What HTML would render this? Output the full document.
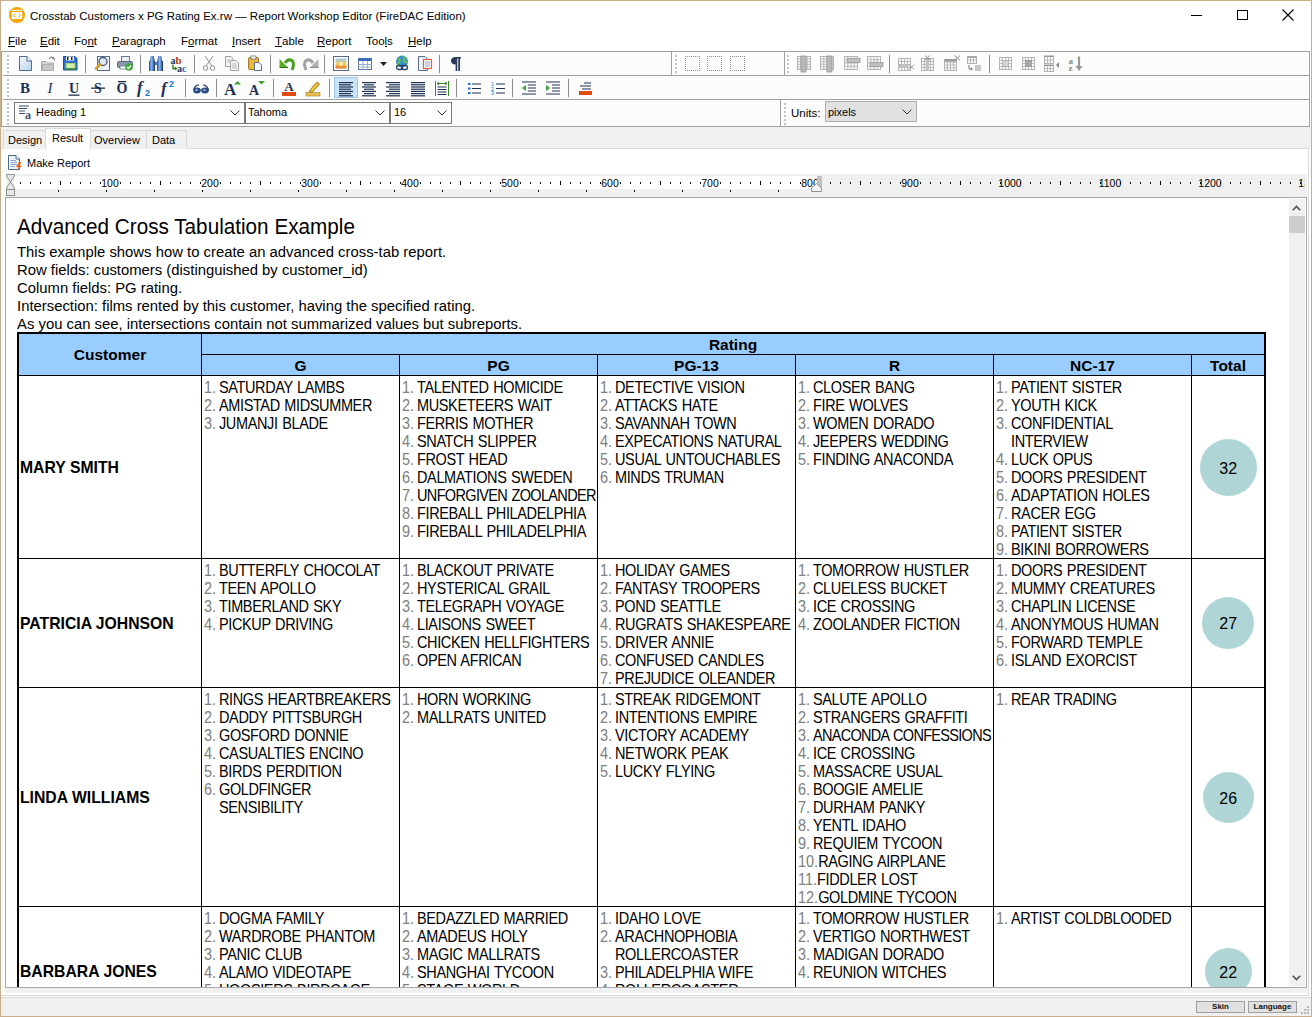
<!DOCTYPE html>
<html><head><meta charset="utf-8">
<style>
*{box-sizing:border-box}
html,body{margin:0;padding:0}
body{width:1312px;height:1017px;position:relative;overflow:hidden;background:#fff;font-family:"Liberation Sans",sans-serif;color:#000}
.a{position:absolute}
#win{left:0;top:0;width:1312px;height:1017px;border:1px solid #c9ae8c;background:#fff}
.title{left:30px;top:10px;font-size:11.5px;white-space:nowrap;color:#000}
.menu span{position:absolute;top:34.5px;font-size:11.5px;white-space:nowrap}
.menu u{text-decoration:none;position:relative}.menu u::after{content:"";position:absolute;left:0;right:0;bottom:0px;height:1px;background:#000}
#tb{left:1px;top:51px;width:1309px;height:76px;border:1px solid #a0a0a0;border-left:1px solid #a0a0a0;background:#fcfcfc}
.hl{height:1px;background:#a0a0a0}
.vl{width:1px;background:#a0a0a0}
.sep{width:1px;height:18px;background:#a0a0a0}
.grip{width:2px;border-left:2px dotted #b8b8b8}
#tabs{left:1px;top:127px;width:1310px;height:22px;background:#f0f0f0}
.tab{position:absolute;border:1px solid #d9d9d9;border-bottom:none;background:#f0f0f0;font-size:11px;padding-left:5px;white-space:nowrap}
#page{left:1px;top:148px;width:1308px;height:848px;background:#fff;border-top:1px solid #d9d9d9;border-right:1px solid #d9d9d9;border-bottom:1px solid #d9d9d9}
#ruler{left:6px;top:174px;width:1301px;height:23px;background:#f0f0f0}
#content{left:5px;top:197px;width:1302px;height:791px;border:1px solid #a3a7ae;background:#fff;overflow:hidden}
#status{left:1px;top:997px;width:1310px;height:19px;background:#f0f0f0;border-top:1px solid #d9d9d9}
.btn{position:absolute;top:1001px;height:12px;border:1px solid #a0a0a0;background:#e1e1e1;font-size:8px;font-weight:bold;text-align:center;line-height:10px;color:#111}

.hd{font-size:22.5px;white-space:nowrap;line-height:24px;transform:scaleX(0.92);transform-origin:0 0}
.it{font-size:15.5px;white-space:nowrap;line-height:18px;transform:scaleX(0.958);transform-origin:0 0}
.hb{font-size:15.5px;font-weight:bold;line-height:18px;white-space:nowrap}
.nm{font-size:15.75px;font-weight:bold;line-height:18px;white-space:nowrap}
.lst{font-size:15.75px;line-height:18px;white-space:nowrap;letter-spacing:-0.4px;word-spacing:1px;transform:scaleX(0.92);transform-origin:0 0}
.li{height:18px}
.n{display:inline-block;min-width:16.3px;color:#808080;letter-spacing:0}
.rl{font-size:10.5px;text-align:center;line-height:12px;white-space:nowrap}
.combo{border:1px solid #7a7a7a;background:#fff}
.cbt{font-size:11px;white-space:nowrap}
.circ{border-radius:50%;background:#b0d5d6;text-align:center;line-height:58px;font-size:16px}
</style></head><body>
<div id="win" class="a"></div>
<!-- title bar -->
<svg class="a" style="left:9px;top:7px" width="16" height="16" viewBox="0 0 16 16"><circle cx="8" cy="8" r="8" fill="#f7a400"/><rect x="2.8" y="2.8" width="10.4" height="1.1" fill="#fff"/><rect x="2.8" y="5" width="10.4" height="7" fill="#fff"/><path d="M6.3 6.6L4.8 8.5L6.3 10.4M9.7 6.6L11.2 8.5L9.7 10.4" fill="none" stroke="#f7a400" stroke-width="1"/></svg>
<div class="a title">Crosstab Customers x PG Rating Ex.rw — Report Workshop Editor (FireDAC Edition)</div>
<div class="a" style="left:1191px;top:15px;width:11px;height:1px;background:#000"></div>
<div class="a" style="left:1237px;top:10px;width:11px;height:10px;border:1px solid #000"></div>
<svg class="a" style="left:1282px;top:9px" width="12" height="12" viewBox="0 0 12 12"><path d="M0.5 0.5 L11.5 11.5 M11.5 0.5 L0.5 11.5" stroke="#000" stroke-width="1.1"/></svg>
<!-- menu -->
<div class="menu">
<span style="left:8px"><u>F</u>ile</span>
<span style="left:40px"><u>E</u>dit</span>
<span style="left:74px">Fo<u>n</u>t</span>
<span style="left:112px"><u>P</u>aragraph</span>
<span style="left:181px">F<u>o</u>rmat</span>
<span style="left:232px"><u>I</u>nsert</span>
<span style="left:275px"><u>T</u>able</span>
<span style="left:317px"><u>R</u>eport</span>
<span style="left:366px">Too<u>l</u>s</span>
<span style="left:408px"><u>H</u>elp</span>
</div>
<!-- toolbar -->
<div id="tb" class="a"></div>
<div class="a hl" style="left:3px;top:75px;width:1306px"></div>
<div class="a hl" style="left:3px;top:99px;width:1306px"></div>
<svg class="a" style="left:17px;top:55px" width="16" height="16" viewBox="0 0 16 16"><defs><linearGradient id="gd" x1="0" y1="0" x2="1" y2="1"><stop offset="0" stop-color="#f4f8fc"/><stop offset="1" stop-color="#b8d4ea"/></linearGradient></defs><path d="M2.5 1.5H10L14.5 6V15.5H2.5Z" fill="url(#gd)" stroke="#4d6a8c"/><path d="M10 1.5V6H14.5" fill="#fff" stroke="#4d6a8c"/></svg>
<svg class="a" style="left:40px;top:55px" width="16" height="16" viewBox="0 0 16 16"><path d="M1.5 6.5H6L7.5 8H13.5V15.5H1.5Z" fill="#d6d6d6" stroke="#a8a8a8"/><path d="M2.5 9.5H13.5V15.5H2.5Z" fill="#c8c8c8" stroke="#b0b0b0"/><path d="M9 4 Q11 0.5 14 3 M14 3 L14.5 5.5 M14 3 L12 3.2" fill="none" stroke="#707070" stroke-width="1"/></svg>
<svg class="a" style="left:62px;top:55px" width="16" height="16" viewBox="0 0 16 16"><path d="M1.5 1.5H13L15 3.5V15H1.5Z" fill="#2e6fd0" stroke="#1f4e9a"/><rect x="4" y="1.5" width="8" height="4" fill="#fff"/><rect x="5" y="2" width="1.5" height="3" fill="#222"/><rect x="9" y="2" width="1.5" height="3" fill="#222"/><rect x="3.5" y="8" width="10" height="6" fill="#a8d870"/><rect x="5" y="9.5" width="7" height="1" fill="#fff"/><rect x="5" y="11.5" width="7" height="1" fill="#fff"/><rect x="3.5" y="13" width="10" height="1.5" fill="#4a9a2a"/></svg>
<div class="a" style="left:85px;top:55px;width:1px;height:18px;background:#8c8c8c"></div>
<svg class="a" style="left:94px;top:55px" width="16" height="16" viewBox="0 0 16 16"><rect x="3.5" y="1.5" width="12" height="14" fill="#eef3f8" stroke="#5a7088"/><circle cx="9" cy="6.5" r="4" fill="#dbe8f4" stroke="#4a5a6a" stroke-width="1.3"/><path d="M6 9.5 L2 13.5" stroke="#d4a020" stroke-width="2.5" stroke-linecap="round"/></svg>
<svg class="a" style="left:117px;top:55px" width="16" height="16" viewBox="0 0 16 16"><rect x="4.5" y="1.5" width="8" height="5" fill="#e8f0f8" stroke="#6a7a8a"/><rect x="0.5" y="6.5" width="15" height="6" rx="1" fill="#8a9aaa" stroke="#5a6a7a"/><rect x="3" y="11" width="10" height="3" fill="#fff" stroke="#6a7a8a" stroke-width="0.8"/><circle cx="12" cy="12" r="3.8" fill="#3aaa3a"/><path d="M10 12 L11.5 13.5 L14 10.5" stroke="#fff" stroke-width="1.2" fill="none"/></svg>
<div class="a" style="left:140px;top:55px;width:1px;height:18px;background:#8c8c8c"></div>
<svg class="a" style="left:148px;top:55px" width="16" height="16" viewBox="0 0 16 16"><defs><linearGradient id="gb" x1="0" y1="0" x2="1" y2="0"><stop offset="0" stop-color="#1a4fa8"/><stop offset="0.45" stop-color="#8ab8f0"/><stop offset="1" stop-color="#102a60"/></linearGradient></defs><path d="M1 6H7V16H1Z M2 3.5H6.5V6H2Z M2.5 1H6V3.5H2.5Z" fill="url(#gb)"/><path d="M9 6H15V16H9Z M9.5 3.5H14V6H9.5Z M10 1H13.5V3.5H10Z" fill="url(#gb)"/><rect x="7" y="7" width="2" height="3" fill="#4a7ad0"/></svg>
<svg class="a" style="left:170px;top:55px" width="18" height="17" viewBox="0 0 18 17"><text x="0.5" y="8.5" font-family="Liberation Serif" font-weight="bold" font-size="10" fill="#1e3050">a</text><text x="5.5" y="8.5" font-family="Liberation Serif" font-weight="bold" font-size="11" fill="#b03a10">b</text><path d="M3 9.5V13.5H6" stroke="#2a7a10" stroke-width="1.4" fill="none"/><path d="M5 11.5L7.5 13.5L5 15.5Z" fill="#2a7a10"/><text x="7" y="16.5" font-family="Liberation Serif" font-weight="bold" font-size="10" fill="#1e3050">a</text><text x="12" y="16.5" font-family="Liberation Serif" font-weight="bold" font-size="10" fill="#2a6ad0">c</text></svg>
<div class="a" style="left:194px;top:55px;width:1px;height:18px;background:#8c8c8c"></div>
<svg class="a" style="left:201px;top:55px" width="16" height="16" viewBox="0 0 16 16"><path d="M4 1 L11 11 M12 1 L5 11" stroke="#909090" stroke-width="1"/><circle cx="4.5" cy="13" r="2.3" fill="none" stroke="#909090"/><circle cx="11.5" cy="13" r="2.3" fill="none" stroke="#909090"/></svg>
<svg class="a" style="left:224px;top:55px" width="16" height="16" viewBox="0 0 16 16"><path d="M1.5 1.5H7L9 3.5V11.5H1.5Z" fill="#f4f4f4" stroke="#a0a0a0"/><path d="M6.5 5.5H12L14.5 8V15.5H6.5Z" fill="#f4f4f4" stroke="#a0a0a0"/><path d="M8 9H12M8 11H13M8 13H13M3 5H7M3 7H7" stroke="#b8b8b8"/></svg>
<svg class="a" style="left:247px;top:55px" width="16" height="16" viewBox="0 0 16 16"><rect x="1.5" y="2.5" width="10" height="12" rx="1" fill="#e8b840" stroke="#a07820"/><rect x="4" y="1" width="5" height="3" fill="#fff" stroke="#707070" stroke-width="0.8"/><path d="M7.5 7.5H12L14.5 10V15.5H7.5Z" fill="#f4f8fc" stroke="#5a7090"/></svg>
<div class="a" style="left:270px;top:55px;width:1px;height:18px;background:#8c8c8c"></div>
<svg class="a" style="left:279px;top:55px" width="17" height="17" viewBox="0 0 17 17"><path d="M6 8 Q9 3.5 13 5.5 Q16 8 13 15" fill="none" stroke="#4aa020" stroke-width="3"/><path d="M0.5 4V12.5H9Z" fill="#5ab02a"/><path d="M0.5 12.5H9" stroke="#2a7010" stroke-width="1"/></svg>
<svg class="a" style="left:302px;top:55px" width="17" height="17" viewBox="0 0 17 17"><path d="M11 8 Q8 3.5 4 5.5 Q1 8 4 15" fill="none" stroke="#a0a0a0" stroke-width="3"/><path d="M16.5 4V12.5H8Z" fill="#b0b0b0"/><path d="M16.5 12.5H8" stroke="#888" stroke-width="1"/></svg>
<div class="a" style="left:324px;top:55px;width:1px;height:18px;background:#8c8c8c"></div>
<svg class="a" style="left:333px;top:55px" width="16" height="16" viewBox="0 0 16 16"><defs><linearGradient id="gs" x1="0" y1="0" x2="0" y2="1"><stop offset="0" stop-color="#9cc8f0"/><stop offset="0.55" stop-color="#f8d060"/><stop offset="1" stop-color="#e07020"/></linearGradient></defs><rect x="0.5" y="1.5" width="15" height="14" fill="#fff" stroke="#5a6a80"/><rect x="2.5" y="3.5" width="11" height="10" fill="url(#gs)"/><circle cx="8" cy="9" r="1.8" fill="#fff8c0"/></svg>
<svg class="a" style="left:357px;top:55px" width="16" height="16" viewBox="0 0 16 16"><rect x="1.5" y="3.5" width="13" height="11" fill="#fff" stroke="#5a78a0"/><rect x="1.5" y="3.5" width="13" height="2.5" fill="#3a6ac0"/><path d="M1.5 9.5H14.5M1.5 12H14.5M6 6V14.5M10.5 6V14.5" stroke="#9ab0d0"/></svg>
<svg class="a" style="left:380px;top:62px" width="8" height="4" viewBox="0 0 8 4"><path d="M0 0H7L3.5 4Z" fill="#222"/></svg>
<svg class="a" style="left:394px;top:55px" width="16" height="16" viewBox="0 0 16 16"><circle cx="8" cy="6.5" r="6" fill="#3a90d8"/><path d="M4 3 Q7 5 5 8 Q3 9 4 11 M9 1.5 Q12 4 10 6 Q12 8 13 7" fill="none" stroke="#6ac040" stroke-width="2"/><rect x="2.5" y="10.5" width="6" height="4" rx="2" fill="none" stroke="#2a4060" stroke-width="1.3"/><rect x="7.5" y="10.5" width="6" height="4" rx="2" fill="none" stroke="#2a4060" stroke-width="1.3"/></svg>
<svg class="a" style="left:417px;top:55px" width="16" height="16" viewBox="0 0 16 16"><path d="M1.5 1.5H8L10.5 4V15.5H1.5Z" fill="#eef3f8" stroke="#5a7090"/><rect x="6.5" y="4.5" width="8" height="9" fill="#fff" stroke="#e06040" stroke-width="1.2"/><path d="M8 7H13M8 9H13M8 11H13" stroke="#8aa0c0"/></svg>
<div class="a" style="left:439px;top:55px;width:1px;height:18px;background:#8c8c8c"></div>
<svg class="a" style="left:450px;top:55px" width="12" height="17" viewBox="0 0 12 17"><path d="M6 2H11V3.5H10V16H8.3V3.5H7.3V16H5.6V9.5 Q1 9.5 1 5.8 Q1 2 6 2Z" fill="#2a3a58"/></svg>
<div class="a" style="left:671px;top:51px;width:1px;height:24px;background:#a0a0a0"></div>
<div class="a" style="left:784px;top:51px;width:1px;height:24px;background:#a0a0a0"></div>
<div class="a" style="left:780px;top:99px;width:1px;height:27px;background:#a0a0a0"></div>
<div class="a" style="left:685px;top:56px;width:15px;height:15px;border:1px dotted #909090"></div>
<div class="a" style="left:707px;top:56px;width:15px;height:15px;border:1px dotted #909090"></div>
<div class="a" style="left:730px;top:56px;width:15px;height:15px;border:1px dotted #909090"></div>
<svg class="a" style="left:797px;top:55px" width="18" height="18" viewBox="0 0 18 18"><rect x="0.5" y="1.5" width="13" height="13" fill="#fafafa" stroke="#b4b4b4"/><path d="M3.8 1 V15" stroke="#b4b4b4" stroke-width="0.9"/><path d="M7.0 1 V15" stroke="#b4b4b4" stroke-width="0.9"/><path d="M10.2 1 V15" stroke="#b4b4b4" stroke-width="0.9"/><path d="M0 4.1 H14" stroke="#b4b4b4" stroke-width="0.9"/><path d="M0 6.7 H14" stroke="#b4b4b4" stroke-width="0.9"/><path d="M0 9.3 H14" stroke="#b4b4b4" stroke-width="0.9"/><path d="M0 11.9 H14" stroke="#b4b4b4" stroke-width="0.9"/><rect x="4" y="1" width="5" height="16" fill="#b8b8b8" stroke="#9a9a9a" stroke-width="0.8"/></svg>
<svg class="a" style="left:820px;top:55px" width="18" height="18" viewBox="0 0 18 18"><rect x="0.5" y="1.5" width="13" height="13" fill="#fafafa" stroke="#b4b4b4"/><path d="M3.8 1 V15" stroke="#b4b4b4" stroke-width="0.9"/><path d="M7.0 1 V15" stroke="#b4b4b4" stroke-width="0.9"/><path d="M10.2 1 V15" stroke="#b4b4b4" stroke-width="0.9"/><path d="M0 4.1 H14" stroke="#b4b4b4" stroke-width="0.9"/><path d="M0 6.7 H14" stroke="#b4b4b4" stroke-width="0.9"/><path d="M0 9.3 H14" stroke="#b4b4b4" stroke-width="0.9"/><path d="M0 11.9 H14" stroke="#b4b4b4" stroke-width="0.9"/><rect x="7" y="1" width="5" height="16" fill="#b8b8b8" stroke="#9a9a9a" stroke-width="0.8"/></svg>
<svg class="a" style="left:844px;top:55px" width="18" height="18" viewBox="0 0 18 18"><rect x="0.5" y="1.5" width="13" height="13" fill="#fafafa" stroke="#b4b4b4"/><path d="M3.8 1 V15" stroke="#b4b4b4" stroke-width="0.9"/><path d="M7.0 1 V15" stroke="#b4b4b4" stroke-width="0.9"/><path d="M10.2 1 V15" stroke="#b4b4b4" stroke-width="0.9"/><path d="M0 4.8 H14" stroke="#b4b4b4" stroke-width="0.9"/><path d="M0 8.0 H14" stroke="#b4b4b4" stroke-width="0.9"/><path d="M0 11.2 H14" stroke="#b4b4b4" stroke-width="0.9"/><rect x="3" y="3.5" width="13" height="4" fill="#c0c0c0" stroke="#9a9a9a" stroke-width="0.8"/></svg>
<svg class="a" style="left:867px;top:55px" width="18" height="18" viewBox="0 0 18 18"><rect x="0.5" y="1.5" width="13" height="13" fill="#fafafa" stroke="#b4b4b4"/><path d="M3.8 1 V15" stroke="#b4b4b4" stroke-width="0.9"/><path d="M7.0 1 V15" stroke="#b4b4b4" stroke-width="0.9"/><path d="M10.2 1 V15" stroke="#b4b4b4" stroke-width="0.9"/><path d="M0 4.8 H14" stroke="#b4b4b4" stroke-width="0.9"/><path d="M0 8.0 H14" stroke="#b4b4b4" stroke-width="0.9"/><path d="M0 11.2 H14" stroke="#b4b4b4" stroke-width="0.9"/><rect x="3" y="7.5" width="13" height="4" fill="#c0c0c0" stroke="#9a9a9a" stroke-width="0.8"/></svg>
<div class="a" style="left:889px;top:55px;width:1px;height:18px;background:#8c8c8c"></div>
<svg class="a" style="left:898px;top:55px" width="18" height="18" viewBox="0 0 18 18"><rect x="0.5" y="3.5" width="12" height="12" fill="#fafafa" stroke="#b4b4b4"/><path d="M3.5 3 V16" stroke="#b4b4b4" stroke-width="0.9"/><path d="M6.5 3 V16" stroke="#b4b4b4" stroke-width="0.9"/><path d="M9.5 3 V16" stroke="#b4b4b4" stroke-width="0.9"/><path d="M0 6.5 H13" stroke="#b4b4b4" stroke-width="0.9"/><path d="M0 9.5 H13" stroke="#b4b4b4" stroke-width="0.9"/><path d="M0 12.5 H13" stroke="#b4b4b4" stroke-width="0.9"/><rect x="0.5" y="9.5" width="10" height="3" fill="#c0c0c0"/><path d="M11 9.5L16 14.5M16 9.5L11 14.5" stroke="#888" stroke-width="0.9"/></svg>
<svg class="a" style="left:921px;top:55px" width="18" height="18" viewBox="0 0 18 18"><rect x="0.5" y="3.5" width="12" height="12" fill="#fafafa" stroke="#b4b4b4"/><path d="M3.5 3 V16" stroke="#b4b4b4" stroke-width="0.9"/><path d="M6.5 3 V16" stroke="#b4b4b4" stroke-width="0.9"/><path d="M9.5 3 V16" stroke="#b4b4b4" stroke-width="0.9"/><path d="M0 6.5 H13" stroke="#b4b4b4" stroke-width="0.9"/><path d="M0 9.5 H13" stroke="#b4b4b4" stroke-width="0.9"/><path d="M0 12.5 H13" stroke="#b4b4b4" stroke-width="0.9"/><rect x="5" y="3" width="3" height="13" fill="#c0c0c0"/><path d="M4 0.5L9 5M9 0.5L4 5" stroke="#888" stroke-width="0.9"/></svg>
<svg class="a" style="left:944px;top:55px" width="18" height="18" viewBox="0 0 18 18"><rect x="0.5" y="4.5" width="12" height="11" fill="#fafafa" stroke="#b4b4b4"/><path d="M3.5 4 V16" stroke="#b4b4b4" stroke-width="0.9"/><path d="M6.5 4 V16" stroke="#b4b4b4" stroke-width="0.9"/><path d="M9.5 4 V16" stroke="#b4b4b4" stroke-width="0.9"/><path d="M0 7.2 H13" stroke="#b4b4b4" stroke-width="0.9"/><path d="M0 10.0 H13" stroke="#b4b4b4" stroke-width="0.9"/><path d="M0 12.8 H13" stroke="#b4b4b4" stroke-width="0.9"/><rect x="0.5" y="4" width="12" height="2.5" fill="#999"/><path d="M10.5 0.5L16 5.5M16 0.5L10.5 5.5" stroke="#888" stroke-width="0.9"/></svg>
<svg class="a" style="left:967px;top:55px" width="18" height="18" viewBox="0 0 18 18"><rect x="0.5" y="1.5" width="9" height="7" fill="#fafafa" stroke="#b4b4b4"/><path d="M3.5 1 V9" stroke="#b4b4b4" stroke-width="0.9"/><path d="M6.5 1 V9" stroke="#b4b4b4" stroke-width="0.9"/><path d="M0 5.0 H10" stroke="#b4b4b4" stroke-width="0.9"/><rect x="0.5" y="1" width="9" height="2" fill="#aaa"/><path d="M2 10V14H5" stroke="#777" stroke-width="1" fill="none"/><path d="M4 12.5L6 14L4 15.5Z" fill="#777"/><path d="M8 11H14M8 13H14M8 15H14" stroke="#888" stroke-width="0.9"/></svg>
<div class="a" style="left:989px;top:55px;width:1px;height:18px;background:#8c8c8c"></div>
<svg class="a" style="left:999px;top:55px" width="18" height="18" viewBox="0 0 18 18"><rect x="0.5" y="2.5" width="12" height="12" fill="#fafafa" stroke="#b4b4b4"/><path d="M3.5 2 V15" stroke="#b4b4b4" stroke-width="0.9"/><path d="M6.5 2 V15" stroke="#b4b4b4" stroke-width="0.9"/><path d="M9.5 2 V15" stroke="#b4b4b4" stroke-width="0.9"/><path d="M0 5.5 H13" stroke="#b4b4b4" stroke-width="0.9"/><path d="M0 8.5 H13" stroke="#b4b4b4" stroke-width="0.9"/><path d="M0 11.5 H13" stroke="#b4b4b4" stroke-width="0.9"/><rect x="3.5" y="5.5" width="6" height="6" fill="#d4d4d4" stroke="#b0b0b0" stroke-width="0.8"/></svg>
<svg class="a" style="left:1022px;top:55px" width="18" height="18" viewBox="0 0 18 18"><rect x="0.5" y="2.5" width="12" height="12" fill="#fafafa" stroke="#b4b4b4"/><path d="M3.5 2 V15" stroke="#b4b4b4" stroke-width="0.9"/><path d="M6.5 2 V15" stroke="#b4b4b4" stroke-width="0.9"/><path d="M9.5 2 V15" stroke="#b4b4b4" stroke-width="0.9"/><path d="M0 5.5 H13" stroke="#b4b4b4" stroke-width="0.9"/><path d="M0 8.5 H13" stroke="#b4b4b4" stroke-width="0.9"/><path d="M0 11.5 H13" stroke="#b4b4b4" stroke-width="0.9"/><rect x="3.5" y="5.5" width="6" height="6" fill="#a8a8a8" stroke="#999" stroke-width="0.8"/></svg>
<svg class="a" style="left:1044px;top:55px" width="18" height="18" viewBox="0 0 18 18"><rect x="0.5" y="1.5" width="9" height="7" fill="#fafafa" stroke="#b4b4b4"/><path d="M3.5 1 V9" stroke="#b4b4b4" stroke-width="0.9"/><path d="M6.5 1 V9" stroke="#b4b4b4" stroke-width="0.9"/><path d="M0 5.0 H10" stroke="#b4b4b4" stroke-width="0.9"/><rect x="0" y="0.5" width="10" height="1.5" fill="#999"/><rect x="0.5" y="10.5" width="9" height="6" fill="#fafafa" stroke="#b4b4b4"/><path d="M3.5 10 V17" stroke="#b4b4b4" stroke-width="0.9"/><path d="M6.5 10 V17" stroke="#b4b4b4" stroke-width="0.9"/><path d="M0 13.5 H10" stroke="#b4b4b4" stroke-width="0.9"/><rect x="0" y="9.5" width="10" height="1.5" fill="#999"/><path d="M15 7L12 10L15 13Z" fill="#888"/></svg>
<svg class="a" style="left:1067px;top:55px" width="18" height="17" viewBox="0 0 18 17"><text x="1.5" y="8.5" font-family="Liberation Serif" font-weight="bold" font-size="9" fill="#888">a</text><text x="1.5" y="16" font-family="Liberation Serif" font-weight="bold" font-size="9" fill="#888">z</text><path d="M12 1.5V12.5" stroke="#999" stroke-width="2.2"/><path d="M8.5 11L12 16L15.5 11Z" fill="#999"/></svg>
<div class="a" style="left:7px;top:55px;width:2px;height:2px;background:#c4c4c4"></div><div class="a" style="left:7px;top:59px;width:2px;height:2px;background:#c4c4c4"></div><div class="a" style="left:7px;top:63px;width:2px;height:2px;background:#c4c4c4"></div><div class="a" style="left:7px;top:67px;width:2px;height:2px;background:#c4c4c4"></div><div class="a" style="left:7px;top:71px;width:2px;height:2px;background:#c4c4c4"></div>
<div class="a" style="left:7px;top:79px;width:2px;height:2px;background:#c4c4c4"></div><div class="a" style="left:7px;top:83px;width:2px;height:2px;background:#c4c4c4"></div><div class="a" style="left:7px;top:87px;width:2px;height:2px;background:#c4c4c4"></div><div class="a" style="left:7px;top:91px;width:2px;height:2px;background:#c4c4c4"></div><div class="a" style="left:7px;top:95px;width:2px;height:2px;background:#c4c4c4"></div>
<div class="a" style="left:7px;top:103px;width:2px;height:2px;background:#c4c4c4"></div><div class="a" style="left:7px;top:107px;width:2px;height:2px;background:#c4c4c4"></div><div class="a" style="left:7px;top:111px;width:2px;height:2px;background:#c4c4c4"></div><div class="a" style="left:7px;top:115px;width:2px;height:2px;background:#c4c4c4"></div><div class="a" style="left:7px;top:119px;width:2px;height:2px;background:#c4c4c4"></div><div class="a" style="left:7px;top:123px;width:2px;height:2px;background:#c4c4c4"></div>
<div class="a" style="left:675px;top:55px;width:2px;height:2px;background:#c4c4c4"></div><div class="a" style="left:675px;top:59px;width:2px;height:2px;background:#c4c4c4"></div><div class="a" style="left:675px;top:63px;width:2px;height:2px;background:#c4c4c4"></div><div class="a" style="left:675px;top:67px;width:2px;height:2px;background:#c4c4c4"></div><div class="a" style="left:675px;top:71px;width:2px;height:2px;background:#c4c4c4"></div>
<div class="a" style="left:787px;top:55px;width:2px;height:2px;background:#c4c4c4"></div><div class="a" style="left:787px;top:59px;width:2px;height:2px;background:#c4c4c4"></div><div class="a" style="left:787px;top:63px;width:2px;height:2px;background:#c4c4c4"></div><div class="a" style="left:787px;top:67px;width:2px;height:2px;background:#c4c4c4"></div><div class="a" style="left:787px;top:71px;width:2px;height:2px;background:#c4c4c4"></div>
<div class="a" style="left:784px;top:103px;width:2px;height:2px;background:#c4c4c4"></div><div class="a" style="left:784px;top:107px;width:2px;height:2px;background:#c4c4c4"></div><div class="a" style="left:784px;top:111px;width:2px;height:2px;background:#c4c4c4"></div><div class="a" style="left:784px;top:115px;width:2px;height:2px;background:#c4c4c4"></div><div class="a" style="left:784px;top:119px;width:2px;height:2px;background:#c4c4c4"></div><div class="a" style="left:784px;top:123px;width:2px;height:2px;background:#c4c4c4"></div>
<svg class="a" style="left:17px;top:79px" width="16" height="18" viewBox="0 0 16 18"><text x="8" y="14" text-anchor="middle" font-family="Liberation Serif" font-size="15" font-weight="bold" font-style="normal" fill="#1c3050">B</text></svg>
<svg class="a" style="left:42px;top:79px" width="16" height="18" viewBox="0 0 16 18"><text x="8" y="14" text-anchor="middle" font-family="Liberation Serif" font-size="15" font-weight="normal" font-style="italic" fill="#1c3050">I</text></svg>
<svg class="a" style="left:66px;top:79px" width="16" height="18" viewBox="0 0 16 18"><text x="8" y="14" text-anchor="middle" font-family="Liberation Serif" font-size="14" font-weight="bold" font-style="normal" fill="#1c3050">U</text><rect x="2.5" y="15.5" width="11" height="1.3" fill="#1c3050"/></svg>
<svg class="a" style="left:90px;top:79px" width="16" height="18" viewBox="0 0 16 18"><text x="8" y="14" text-anchor="middle" font-family="Liberation Serif" font-size="14" font-weight="bold" font-style="normal" fill="#1c3050">S</text><rect x="1" y="8.5" width="14" height="1.3" fill="#1c3050"/></svg>
<svg class="a" style="left:114px;top:79px" width="16" height="18" viewBox="0 0 16 18"><text x="8" y="14" text-anchor="middle" font-family="Liberation Serif" font-size="14" font-weight="bold" font-style="normal" fill="#1c3050">O</text><rect x="4" y="2" width="8" height="1.3" fill="#1c3050"/></svg>
<svg class="a" style="left:136px;top:79px" width="16" height="18" viewBox="0 0 16 18"><text x="1" y="14" font-family="Liberation Serif" font-style="italic" font-weight="bold" font-size="17" fill="#1c3050">f</text><text x="9" y="17" font-family="Liberation Sans" font-weight="bold" font-size="9" fill="#1a70d0">2</text></svg>
<svg class="a" style="left:160px;top:79px" width="16" height="18" viewBox="0 0 16 18"><text x="1" y="15" font-family="Liberation Serif" font-style="italic" font-weight="bold" font-size="17" fill="#1c3050">f</text><text x="9" y="8" font-family="Liberation Sans" font-weight="bold" font-size="9" fill="#1a70d0">2</text></svg>
<div class="a" style="left:185px;top:79px;width:1px;height:18px;background:#8c8c8c"></div>
<svg class="a" style="left:192px;top:79px" width="18" height="18" viewBox="0 0 18 18"><path d="M1.5 11 Q3 6 7 6 M16.5 11 Q15 6 11 6" fill="none" stroke="#1c3050" stroke-width="1.2"/><ellipse cx="5" cy="11.5" rx="3.8" ry="3" fill="#2a4a80"/><ellipse cx="13" cy="11.5" rx="3.8" ry="3" fill="#2a4a80"/><ellipse cx="4.5" cy="11" rx="1.5" ry="1" fill="#8ab0e0"/><ellipse cx="12.5" cy="11" rx="1.5" ry="1" fill="#8ab0e0"/><path d="M8.5 10.5H9.5" stroke="#1c3050" stroke-width="1.2"/></svg>
<div class="a" style="left:216px;top:79px;width:1px;height:18px;background:#8c8c8c"></div>
<svg class="a" style="left:224px;top:79px" width="18" height="18" viewBox="0 0 18 18"><text x="0" y="16" font-family="Liberation Serif" font-weight="bold" font-size="17" fill="#1c3050">A</text><path d="M10 5.5 L13.5 2 L17 5.5Z" fill="#3aa030"/></svg>
<svg class="a" style="left:248px;top:79px" width="18" height="18" viewBox="0 0 18 18"><text x="1" y="16" font-family="Liberation Serif" font-weight="bold" font-size="14" fill="#1c3050">A</text><path d="M10 2 L13.5 5.5 L17 2Z" fill="#3aa030"/></svg>
<div class="a" style="left:273px;top:79px;width:1px;height:18px;background:#8c8c8c"></div>
<svg class="a" style="left:281px;top:79px" width="16" height="18" viewBox="0 0 16 18"><text x="8" y="12" text-anchor="middle" font-family="Liberation Serif" font-weight="bold" font-size="13" fill="#1c3050">A</text><rect x="1" y="13" width="14" height="4" fill="#e04a10"/></svg>
<svg class="a" style="left:305px;top:79px" width="16" height="18" viewBox="0 0 16 18"><path d="M5 11 L12 3 L14.5 5 L7.5 13 L4.5 13.5 Z" fill="#f0c828" stroke="#806010" stroke-width="0.8"/><rect x="1" y="13.5" width="14" height="3.5" fill="#e8c050" stroke="#a08030" stroke-width="0.6"/></svg>
<div class="a" style="left:329px;top:79px;width:1px;height:18px;background:#8c8c8c"></div>
<div class="a" style="left:334px;top:77px;width:24px;height:21px;background:#cce4f7;border:1px solid #99c9ef"></div>
<svg class="a" style="left:338px;top:79px" width="16" height="18" viewBox="0 0 16 18"><rect x="1" y="3.0" width="14" height="1.2" fill="#1c3050"/><rect x="1" y="5.2" width="12" height="1.2" fill="#1c3050"/><rect x="1" y="7.4" width="14" height="1.2" fill="#1c3050"/><rect x="1" y="9.6" width="12" height="1.2" fill="#1c3050"/><rect x="1" y="11.8" width="14" height="1.2" fill="#1c3050"/><rect x="1" y="14.0" width="12" height="1.2" fill="#1c3050"/><rect x="1" y="16.2" width="14" height="1.2" fill="#1c3050"/></svg>
<svg class="a" style="left:361px;top:79px" width="16" height="18" viewBox="0 0 16 18"><rect x="1.0" y="3.0" width="14" height="1.2" fill="#1c3050"/><rect x="3.0" y="5.2" width="10" height="1.2" fill="#1c3050"/><rect x="1.0" y="7.4" width="14" height="1.2" fill="#1c3050"/><rect x="3.0" y="9.6" width="10" height="1.2" fill="#1c3050"/><rect x="1.0" y="11.8" width="14" height="1.2" fill="#1c3050"/><rect x="3.0" y="14.0" width="10" height="1.2" fill="#1c3050"/><rect x="1.0" y="16.2" width="14" height="1.2" fill="#1c3050"/></svg>
<svg class="a" style="left:385px;top:79px" width="16" height="18" viewBox="0 0 16 18"><rect x="1" y="3.0" width="14" height="1.2" fill="#1c3050"/><rect x="4" y="5.2" width="11" height="1.2" fill="#1c3050"/><rect x="1" y="7.4" width="14" height="1.2" fill="#1c3050"/><rect x="4" y="9.6" width="11" height="1.2" fill="#1c3050"/><rect x="1" y="11.8" width="14" height="1.2" fill="#1c3050"/><rect x="4" y="14.0" width="11" height="1.2" fill="#1c3050"/><rect x="1" y="16.2" width="14" height="1.2" fill="#1c3050"/></svg>
<svg class="a" style="left:410px;top:79px" width="16" height="18" viewBox="0 0 16 18"><rect x="1.0" y="3.0" width="14" height="1.2" fill="#1c3050"/><rect x="1.0" y="5.2" width="14" height="1.2" fill="#1c3050"/><rect x="1.0" y="7.4" width="14" height="1.2" fill="#1c3050"/><rect x="1.0" y="9.6" width="14" height="1.2" fill="#1c3050"/><rect x="1.0" y="11.8" width="14" height="1.2" fill="#1c3050"/><rect x="1.0" y="14.0" width="14" height="1.2" fill="#1c3050"/><rect x="1.0" y="16.2" width="14" height="1.2" fill="#1c3050"/></svg>
<svg class="a" style="left:434px;top:79px" width="16" height="18" viewBox="0 0 16 18"><path d="M1.5 2V17M14.5 2V17" stroke="#3a8a2a"/><path d="M3 4.5H13M3 4.5L5 3M3 4.5L5 6M13 4.5L11 3M13 4.5L11 6" stroke="#3a8a2a"/><path d="M3.5 8H12.5M3.5 10.5H12.5M3.5 13H12.5M3.5 15.5H12.5" stroke="#1c3050"/></svg>
<div class="a" style="left:456px;top:79px;width:1px;height:18px;background:#8c8c8c"></div>
<svg class="a" style="left:466px;top:79px" width="16" height="18" viewBox="0 0 16 18"><rect x="2" y="4" width="2.5" height="2" fill="#1a70d0"/><rect x="2" y="8.5" width="2.5" height="2" fill="#1a70d0"/><rect x="2" y="13" width="2.5" height="2" fill="#1a70d0"/><path d="M6 5H15M6 9.5H15M6 14H15" stroke="#1c3050"/></svg>
<svg class="a" style="left:490px;top:79px" width="16" height="18" viewBox="0 0 16 18"><text x="1" y="7" font-family="Liberation Sans" font-size="5.5" fill="#1a70d0">1</text><text x="1" y="11.5" font-family="Liberation Sans" font-size="5.5" fill="#1a70d0">2</text><text x="1" y="16" font-family="Liberation Sans" font-size="5.5" fill="#1a70d0">3</text><path d="M6 5H15M6 9.5H15M6 14H15" stroke="#1c3050"/></svg>
<div class="a" style="left:512px;top:79px;width:1px;height:18px;background:#8c8c8c"></div>
<svg class="a" style="left:521px;top:79px" width="16" height="18" viewBox="0 0 16 18"><path d="M1 3H15M7 6H15M7 9H15M7 12H15M1 15H15" stroke="#1c3050" stroke-width="1.2"/><path d="M1 9L5 6V12Z" fill="#3aa030"/></svg>
<svg class="a" style="left:545px;top:79px" width="16" height="18" viewBox="0 0 16 18"><path d="M1 3H15M7 6H15M7 9H15M7 12H15M1 15H15" stroke="#1c3050" stroke-width="1.2"/><path d="M5 9L1 6V12Z" fill="#3aa030"/></svg>
<div class="a" style="left:568px;top:79px;width:1px;height:18px;background:#8c8c8c"></div>
<svg class="a" style="left:577px;top:79px" width="16" height="18" viewBox="0 0 16 18"><path d="M7 4H14M3 7H14M5 10H14" stroke="#1c3050" stroke-width="1.2"/><rect x="2" y="12" width="13" height="4" fill="#e04a10"/></svg>
<div class="a combo" style="left:14px;top:102px;width:231px;height:22px"></div>
<div class="a combo" style="left:245px;top:102px;width:145px;height:22px"></div>
<div class="a combo" style="left:390px;top:102px;width:62px;height:22px"></div>
<svg class="a" style="left:19px;top:104px" width="14" height="16" viewBox="0 0 14 16"><path d="M0 2H10M0 4.5H8M0 7H6M0 9.5H6" stroke="#3a5070" stroke-width="1"/><text x="6" y="15" font-family="Liberation Serif" font-weight="bold" font-size="12" fill="#3a5070">a</text></svg>
<div class="a cbt" style="left:36px;top:106px">Heading 1</div>
<div class="a cbt" style="left:248px;top:106px">Tahoma</div>
<div class="a cbt" style="left:394px;top:106px">16</div>
<svg class="a" style="left:230px;top:110px" width="10" height="6" viewBox="0 0 10 6"><path d="M0.5 0.5L5 5L9.5 0.5" fill="none" stroke="#333" stroke-width="1"/></svg>
<svg class="a" style="left:375px;top:110px" width="10" height="6" viewBox="0 0 10 6"><path d="M0.5 0.5L5 5L9.5 0.5" fill="none" stroke="#333" stroke-width="1"/></svg>
<svg class="a" style="left:437px;top:110px" width="10" height="6" viewBox="0 0 10 6"><path d="M0.5 0.5L5 5L9.5 0.5" fill="none" stroke="#333" stroke-width="1"/></svg>
<div class="a" style="left:791px;top:107px;font-size:11.5px">Units:</div>
<div class="a" style="left:825px;top:101px;width:92px;height:21px;background:#e1e1e1;border:1px solid #adadad"></div>
<div class="a cbt" style="left:828px;top:106px">pixels</div>
<svg class="a" style="left:902px;top:109px" width="10" height="6" viewBox="0 0 10 6"><path d="M0.5 0.5L5 5L9.5 0.5" fill="none" stroke="#333" stroke-width="1"/></svg>
<!-- tabs -->
<div id="tabs" class="a"></div>
<div id="page" class="a"></div>
<div class="tab" style="left:3px;top:130px;width:43px;height:19px;line-height:18px;padding-left:4px">Design</div>
<div class="tab" style="left:90px;top:130px;width:57px;height:19px;line-height:18px;padding-left:3px">Overview</div>
<div class="tab" style="left:146px;top:130px;width:41px;height:19px;line-height:18px;padding-left:5px">Data</div>
<div class="tab" style="left:45px;top:128px;width:46px;height:21px;line-height:19px;background:#fff;padding-left:6px">Result</div>
<!-- make report -->
<div class="a" style="left:27px;top:157px;font-size:11px;white-space:nowrap">Make Report</div>
<!-- ruler -->
<div id="ruler" class="a"></div>
<div class="a" style="left:0;top:170px;width:1305px;height:27px;overflow:hidden"><div class="a" style="left:0;top:-170px;width:1312px;height:400px"><div class="a" style="left:14px;top:176px;width:803px;height:13px;background:#fff"></div>
<div class="a" style="left:20px;top:182px;width:1px;height:2px;background:#000"></div>
<div class="a" style="left:30px;top:182px;width:1px;height:2px;background:#000"></div>
<div class="a" style="left:40px;top:182px;width:1px;height:2px;background:#000"></div>
<div class="a" style="left:50px;top:182px;width:1px;height:2px;background:#000"></div>
<div class="a" style="left:60px;top:181px;width:1px;height:4px;background:#000"></div>
<div class="a" style="left:70px;top:182px;width:1px;height:2px;background:#000"></div>
<div class="a" style="left:80px;top:182px;width:1px;height:2px;background:#000"></div>
<div class="a" style="left:90px;top:182px;width:1px;height:2px;background:#000"></div>
<div class="a" style="left:100px;top:182px;width:1px;height:2px;background:#000"></div>
<div class="a" style="left:120px;top:182px;width:1px;height:2px;background:#000"></div>
<div class="a" style="left:130px;top:182px;width:1px;height:2px;background:#000"></div>
<div class="a" style="left:140px;top:182px;width:1px;height:2px;background:#000"></div>
<div class="a" style="left:150px;top:182px;width:1px;height:2px;background:#000"></div>
<div class="a" style="left:160px;top:181px;width:1px;height:4px;background:#000"></div>
<div class="a" style="left:170px;top:182px;width:1px;height:2px;background:#000"></div>
<div class="a" style="left:180px;top:182px;width:1px;height:2px;background:#000"></div>
<div class="a" style="left:190px;top:182px;width:1px;height:2px;background:#000"></div>
<div class="a" style="left:200px;top:182px;width:1px;height:2px;background:#000"></div>
<div class="a" style="left:220px;top:182px;width:1px;height:2px;background:#000"></div>
<div class="a" style="left:230px;top:182px;width:1px;height:2px;background:#000"></div>
<div class="a" style="left:240px;top:182px;width:1px;height:2px;background:#000"></div>
<div class="a" style="left:250px;top:182px;width:1px;height:2px;background:#000"></div>
<div class="a" style="left:260px;top:181px;width:1px;height:4px;background:#000"></div>
<div class="a" style="left:270px;top:182px;width:1px;height:2px;background:#000"></div>
<div class="a" style="left:280px;top:182px;width:1px;height:2px;background:#000"></div>
<div class="a" style="left:290px;top:182px;width:1px;height:2px;background:#000"></div>
<div class="a" style="left:300px;top:182px;width:1px;height:2px;background:#000"></div>
<div class="a" style="left:320px;top:182px;width:1px;height:2px;background:#000"></div>
<div class="a" style="left:330px;top:182px;width:1px;height:2px;background:#000"></div>
<div class="a" style="left:340px;top:182px;width:1px;height:2px;background:#000"></div>
<div class="a" style="left:350px;top:182px;width:1px;height:2px;background:#000"></div>
<div class="a" style="left:360px;top:181px;width:1px;height:4px;background:#000"></div>
<div class="a" style="left:370px;top:182px;width:1px;height:2px;background:#000"></div>
<div class="a" style="left:380px;top:182px;width:1px;height:2px;background:#000"></div>
<div class="a" style="left:390px;top:182px;width:1px;height:2px;background:#000"></div>
<div class="a" style="left:400px;top:182px;width:1px;height:2px;background:#000"></div>
<div class="a" style="left:420px;top:182px;width:1px;height:2px;background:#000"></div>
<div class="a" style="left:430px;top:182px;width:1px;height:2px;background:#000"></div>
<div class="a" style="left:440px;top:182px;width:1px;height:2px;background:#000"></div>
<div class="a" style="left:450px;top:182px;width:1px;height:2px;background:#000"></div>
<div class="a" style="left:460px;top:181px;width:1px;height:4px;background:#000"></div>
<div class="a" style="left:470px;top:182px;width:1px;height:2px;background:#000"></div>
<div class="a" style="left:480px;top:182px;width:1px;height:2px;background:#000"></div>
<div class="a" style="left:490px;top:182px;width:1px;height:2px;background:#000"></div>
<div class="a" style="left:500px;top:182px;width:1px;height:2px;background:#000"></div>
<div class="a" style="left:520px;top:182px;width:1px;height:2px;background:#000"></div>
<div class="a" style="left:530px;top:182px;width:1px;height:2px;background:#000"></div>
<div class="a" style="left:540px;top:182px;width:1px;height:2px;background:#000"></div>
<div class="a" style="left:550px;top:182px;width:1px;height:2px;background:#000"></div>
<div class="a" style="left:560px;top:181px;width:1px;height:4px;background:#000"></div>
<div class="a" style="left:570px;top:182px;width:1px;height:2px;background:#000"></div>
<div class="a" style="left:580px;top:182px;width:1px;height:2px;background:#000"></div>
<div class="a" style="left:590px;top:182px;width:1px;height:2px;background:#000"></div>
<div class="a" style="left:600px;top:182px;width:1px;height:2px;background:#000"></div>
<div class="a" style="left:620px;top:182px;width:1px;height:2px;background:#000"></div>
<div class="a" style="left:630px;top:182px;width:1px;height:2px;background:#000"></div>
<div class="a" style="left:640px;top:182px;width:1px;height:2px;background:#000"></div>
<div class="a" style="left:650px;top:182px;width:1px;height:2px;background:#000"></div>
<div class="a" style="left:660px;top:181px;width:1px;height:4px;background:#000"></div>
<div class="a" style="left:670px;top:182px;width:1px;height:2px;background:#000"></div>
<div class="a" style="left:680px;top:182px;width:1px;height:2px;background:#000"></div>
<div class="a" style="left:690px;top:182px;width:1px;height:2px;background:#000"></div>
<div class="a" style="left:700px;top:182px;width:1px;height:2px;background:#000"></div>
<div class="a" style="left:720px;top:182px;width:1px;height:2px;background:#000"></div>
<div class="a" style="left:730px;top:182px;width:1px;height:2px;background:#000"></div>
<div class="a" style="left:740px;top:182px;width:1px;height:2px;background:#000"></div>
<div class="a" style="left:750px;top:182px;width:1px;height:2px;background:#000"></div>
<div class="a" style="left:760px;top:181px;width:1px;height:4px;background:#000"></div>
<div class="a" style="left:770px;top:182px;width:1px;height:2px;background:#000"></div>
<div class="a" style="left:780px;top:182px;width:1px;height:2px;background:#000"></div>
<div class="a" style="left:790px;top:182px;width:1px;height:2px;background:#000"></div>
<div class="a" style="left:800px;top:182px;width:1px;height:2px;background:#000"></div>
<div class="a" style="left:820px;top:182px;width:1px;height:2px;background:#000"></div>
<div class="a" style="left:830px;top:182px;width:1px;height:2px;background:#000"></div>
<div class="a" style="left:840px;top:182px;width:1px;height:2px;background:#000"></div>
<div class="a" style="left:850px;top:182px;width:1px;height:2px;background:#000"></div>
<div class="a" style="left:860px;top:181px;width:1px;height:4px;background:#000"></div>
<div class="a" style="left:870px;top:182px;width:1px;height:2px;background:#000"></div>
<div class="a" style="left:880px;top:182px;width:1px;height:2px;background:#000"></div>
<div class="a" style="left:890px;top:182px;width:1px;height:2px;background:#000"></div>
<div class="a" style="left:900px;top:182px;width:1px;height:2px;background:#000"></div>
<div class="a" style="left:920px;top:182px;width:1px;height:2px;background:#000"></div>
<div class="a" style="left:930px;top:182px;width:1px;height:2px;background:#000"></div>
<div class="a" style="left:940px;top:182px;width:1px;height:2px;background:#000"></div>
<div class="a" style="left:950px;top:182px;width:1px;height:2px;background:#000"></div>
<div class="a" style="left:960px;top:181px;width:1px;height:4px;background:#000"></div>
<div class="a" style="left:970px;top:182px;width:1px;height:2px;background:#000"></div>
<div class="a" style="left:980px;top:182px;width:1px;height:2px;background:#000"></div>
<div class="a" style="left:990px;top:182px;width:1px;height:2px;background:#000"></div>
<div class="a" style="left:1000px;top:182px;width:1px;height:2px;background:#000"></div>
<div class="a" style="left:1020px;top:182px;width:1px;height:2px;background:#000"></div>
<div class="a" style="left:1030px;top:182px;width:1px;height:2px;background:#000"></div>
<div class="a" style="left:1040px;top:182px;width:1px;height:2px;background:#000"></div>
<div class="a" style="left:1050px;top:182px;width:1px;height:2px;background:#000"></div>
<div class="a" style="left:1060px;top:181px;width:1px;height:4px;background:#000"></div>
<div class="a" style="left:1070px;top:182px;width:1px;height:2px;background:#000"></div>
<div class="a" style="left:1080px;top:182px;width:1px;height:2px;background:#000"></div>
<div class="a" style="left:1090px;top:182px;width:1px;height:2px;background:#000"></div>
<div class="a" style="left:1100px;top:182px;width:1px;height:2px;background:#000"></div>
<div class="a" style="left:1120px;top:182px;width:1px;height:2px;background:#000"></div>
<div class="a" style="left:1130px;top:182px;width:1px;height:2px;background:#000"></div>
<div class="a" style="left:1140px;top:182px;width:1px;height:2px;background:#000"></div>
<div class="a" style="left:1150px;top:182px;width:1px;height:2px;background:#000"></div>
<div class="a" style="left:1160px;top:181px;width:1px;height:4px;background:#000"></div>
<div class="a" style="left:1170px;top:182px;width:1px;height:2px;background:#000"></div>
<div class="a" style="left:1180px;top:182px;width:1px;height:2px;background:#000"></div>
<div class="a" style="left:1190px;top:182px;width:1px;height:2px;background:#000"></div>
<div class="a" style="left:1200px;top:182px;width:1px;height:2px;background:#000"></div>
<div class="a" style="left:1220px;top:182px;width:1px;height:2px;background:#000"></div>
<div class="a" style="left:1230px;top:182px;width:1px;height:2px;background:#000"></div>
<div class="a" style="left:1240px;top:182px;width:1px;height:2px;background:#000"></div>
<div class="a" style="left:1250px;top:182px;width:1px;height:2px;background:#000"></div>
<div class="a" style="left:1260px;top:181px;width:1px;height:4px;background:#000"></div>
<div class="a" style="left:1270px;top:182px;width:1px;height:2px;background:#000"></div>
<div class="a" style="left:1280px;top:182px;width:1px;height:2px;background:#000"></div>
<div class="a" style="left:1290px;top:182px;width:1px;height:2px;background:#000"></div>
<div class="a" style="left:1300px;top:182px;width:1px;height:2px;background:#000"></div>
<div class="a rl" style="left:90px;top:177px;width:40px">100</div>
<div class="a rl" style="left:190px;top:177px;width:40px">200</div>
<div class="a rl" style="left:290px;top:177px;width:40px">300</div>
<div class="a rl" style="left:390px;top:177px;width:40px">400</div>
<div class="a rl" style="left:490px;top:177px;width:40px">500</div>
<div class="a rl" style="left:590px;top:177px;width:40px">600</div>
<div class="a rl" style="left:690px;top:177px;width:40px">700</div>
<div class="a rl" style="left:790px;top:177px;width:40px">800</div>
<div class="a rl" style="left:890px;top:177px;width:40px">900</div>
<div class="a rl" style="left:990px;top:177px;width:40px">1000</div>
<div class="a rl" style="left:1090px;top:177px;width:40px">1100</div>
<div class="a rl" style="left:1190px;top:177px;width:40px">1200</div>
<div class="a rl" style="left:1290px;top:177px;width:40px">1300</div>
<div class="a" style="left:58px;top:190px;width:1px;height:2px;background:#000"></div>
<div class="a" style="left:106px;top:190px;width:1px;height:2px;background:#000"></div>
<div class="a" style="left:154px;top:190px;width:1px;height:2px;background:#000"></div>
<div class="a" style="left:202px;top:190px;width:1px;height:2px;background:#000"></div>
<div class="a" style="left:250px;top:190px;width:1px;height:2px;background:#000"></div>
<div class="a" style="left:298px;top:190px;width:1px;height:2px;background:#000"></div>
<div class="a" style="left:346px;top:190px;width:1px;height:2px;background:#000"></div>
<div class="a" style="left:394px;top:190px;width:1px;height:2px;background:#000"></div>
<div class="a" style="left:442px;top:190px;width:1px;height:2px;background:#000"></div>
<div class="a" style="left:490px;top:190px;width:1px;height:2px;background:#000"></div>
<div class="a" style="left:538px;top:190px;width:1px;height:2px;background:#000"></div>
<div class="a" style="left:586px;top:190px;width:1px;height:2px;background:#000"></div>
<div class="a" style="left:634px;top:190px;width:1px;height:2px;background:#000"></div>
<div class="a" style="left:682px;top:190px;width:1px;height:2px;background:#000"></div>
<div class="a" style="left:730px;top:190px;width:1px;height:2px;background:#000"></div>
<div class="a" style="left:778px;top:190px;width:1px;height:2px;background:#000"></div>
<svg class="a" style="left:6px;top:174px" width="9" height="23" viewBox="0 0 9 23"><path d="M0.5 0.5H8.5V2L4.5 8L8.5 14V15.5H0.5V14L4.5 8L0.5 2Z" fill="#e8e8e8" stroke="#909090"/><rect x="0.5" y="15.5" width="8" height="6" fill="#e8e8e8" stroke="#909090"/></svg>
<div class="a" style="left:817px;top:176px;width:5px;height:13px;background:#c0c0c0"></div>
<svg class="a" style="left:811px;top:183px" width="11" height="9" viewBox="0 0 11 9"><path d="M5.5 0.5L10.5 5V8.5H0.5V5Z" fill="#f4f4f4" stroke="#909090"/></svg></div></div>
<!-- content -->
<div id="content" class="a">
<div class="a hd" style="left:11px;top:17px">Advanced Cross Tabulation Example</div>
<div class="a it" style="left:11px;top:45px">This example shows how to create an advanced cross-tab report.</div>
<div class="a it" style="left:11px;top:63px">Row fields: customers (distinguished by customer_id)</div>
<div class="a it" style="left:11px;top:81px">Column fields: PG rating.</div>
<div class="a it" style="left:11px;top:99px">Intersection: films rented by this customer, having the specified rating.</div>
<div class="a it" style="left:11px;top:117px">As you can see, intersections contain not summarized values but subreports.</div>
<div class="a" style="left:13px;top:136px;width:1245px;height:41px;background:#99ccff"></div>
<div class="a" style="left:11px;top:134px;width:1249px;height:2px;background:#000"></div>
<div class="a" style="left:11px;top:134px;width:2px;height:700px;background:#000"></div>
<div class="a" style="left:1258px;top:134px;width:2px;height:700px;background:#000"></div>
<div class="a" style="left:195px;top:156px;width:1064px;height:1px;background:#000"></div>
<div class="a" style="left:13px;top:177px;width:1245px;height:1px;background:#000"></div>
<div class="a" style="left:195px;top:136px;width:1px;height:700px;background:#000"></div>
<div class="a" style="left:393px;top:157px;width:1px;height:700px;background:#000"></div>
<div class="a" style="left:591px;top:157px;width:1px;height:700px;background:#000"></div>
<div class="a" style="left:789px;top:157px;width:1px;height:700px;background:#000"></div>
<div class="a" style="left:987px;top:157px;width:1px;height:700px;background:#000"></div>
<div class="a" style="left:1185px;top:157px;width:1px;height:700px;background:#000"></div>
<div class="a" style="left:13px;top:360px;width:1245px;height:1px;background:#000"></div>
<div class="a" style="left:13px;top:489px;width:1245px;height:1px;background:#000"></div>
<div class="a" style="left:13px;top:708px;width:1245px;height:1px;background:#000"></div>
<div class="a hb" style="left:13px;top:148px;width:182px;text-align:center">Customer</div>
<div class="a hb" style="left:196px;top:138px;width:1062px;text-align:center">Rating</div>
<div class="a hb" style="left:196px;top:159px;width:197px;text-align:center">G</div>
<div class="a hb" style="left:394px;top:159px;width:197px;text-align:center">PG</div>
<div class="a hb" style="left:592px;top:159px;width:197px;text-align:center">PG-13</div>
<div class="a hb" style="left:790px;top:159px;width:197px;text-align:center">R</div>
<div class="a hb" style="left:988px;top:159px;width:197px;text-align:center">NC-17</div>
<div class="a hb" style="left:1186px;top:159px;width:72px;text-align:center">Total</div>
<div class="a nm" style="left:14px;top:261px">MARY SMITH</div>
<div class="a circ" style="left:1193.69px;top:240.69px;width:57.02px;height:57.02px;line-height:59.02px">32</div>
<div class="a lst" style="left:198px;top:181px"><div class="li"><span class="n">1.</span>SATURDAY LAMBS</div><div class="li"><span class="n">2.</span>AMISTAD MIDSUMMER</div><div class="li"><span class="n">3.</span>JUMANJI BLADE</div></div>
<div class="a lst" style="left:396px;top:181px"><div class="li"><span class="n">1.</span>TALENTED HOMICIDE</div><div class="li"><span class="n">2.</span>MUSKETEERS WAIT</div><div class="li"><span class="n">3.</span>FERRIS MOTHER</div><div class="li"><span class="n">4.</span>SNATCH SLIPPER</div><div class="li"><span class="n">5.</span>FROST HEAD</div><div class="li"><span class="n">6.</span>DALMATIONS SWEDEN</div><div class="li"><span class="n">7.</span><span style="letter-spacing:-0.7px">UNFORGIVEN ZOOLANDER</span></div><div class="li"><span class="n">8.</span>FIREBALL PHILADELPHIA</div><div class="li"><span class="n">9.</span>FIREBALL PHILADELPHIA</div></div>
<div class="a lst" style="left:594px;top:181px"><div class="li"><span class="n">1.</span>DETECTIVE VISION</div><div class="li"><span class="n">2.</span>ATTACKS HATE</div><div class="li"><span class="n">3.</span>SAVANNAH TOWN</div><div class="li"><span class="n">4.</span>EXPECATIONS NATURAL</div><div class="li"><span class="n">5.</span>USUAL UNTOUCHABLES</div><div class="li"><span class="n">6.</span>MINDS TRUMAN</div></div>
<div class="a lst" style="left:792px;top:181px"><div class="li"><span class="n">1.</span>CLOSER BANG</div><div class="li"><span class="n">2.</span>FIRE WOLVES</div><div class="li"><span class="n">3.</span>WOMEN DORADO</div><div class="li"><span class="n">4.</span>JEEPERS WEDDING</div><div class="li"><span class="n">5.</span>FINDING ANACONDA</div></div>
<div class="a lst" style="left:990px;top:181px"><div class="li"><span class="n">1.</span>PATIENT SISTER</div><div class="li"><span class="n">2.</span>YOUTH KICK</div><div class="li"><span class="n">3.</span>CONFIDENTIAL</div><div class="li"><span class="n"></span>INTERVIEW</div><div class="li"><span class="n">4.</span>LUCK OPUS</div><div class="li"><span class="n">5.</span>DOORS PRESIDENT</div><div class="li"><span class="n">6.</span>ADAPTATION HOLES</div><div class="li"><span class="n">7.</span>RACER EGG</div><div class="li"><span class="n">8.</span>PATIENT SISTER</div><div class="li"><span class="n">9.</span>BIKINI BORROWERS</div></div>
<div class="a nm" style="left:14px;top:417px">PATRICIA JOHNSON</div>
<div class="a circ" style="left:1196.01px;top:399.01px;width:52.38px;height:52.38px;line-height:54.38px">27</div>
<div class="a lst" style="left:198px;top:364px"><div class="li"><span class="n">1.</span>BUTTERFLY CHOCOLAT</div><div class="li"><span class="n">2.</span>TEEN APOLLO</div><div class="li"><span class="n">3.</span>TIMBERLAND SKY</div><div class="li"><span class="n">4.</span>PICKUP DRIVING</div></div>
<div class="a lst" style="left:396px;top:364px"><div class="li"><span class="n">1.</span>BLACKOUT PRIVATE</div><div class="li"><span class="n">2.</span>HYSTERICAL GRAIL</div><div class="li"><span class="n">3.</span>TELEGRAPH VOYAGE</div><div class="li"><span class="n">4.</span>LIAISONS SWEET</div><div class="li"><span class="n">5.</span>CHICKEN HELLFIGHTERS</div><div class="li"><span class="n">6.</span>OPEN AFRICAN</div></div>
<div class="a lst" style="left:594px;top:364px"><div class="li"><span class="n">1.</span>HOLIDAY GAMES</div><div class="li"><span class="n">2.</span>FANTASY TROOPERS</div><div class="li"><span class="n">3.</span>POND SEATTLE</div><div class="li"><span class="n">4.</span>RUGRATS SHAKESPEARE</div><div class="li"><span class="n">5.</span>DRIVER ANNIE</div><div class="li"><span class="n">6.</span>CONFUSED CANDLES</div><div class="li"><span class="n">7.</span>PREJUDICE OLEANDER</div></div>
<div class="a lst" style="left:792px;top:364px"><div class="li"><span class="n">1.</span>TOMORROW HUSTLER</div><div class="li"><span class="n">2.</span>CLUELESS BUCKET</div><div class="li"><span class="n">3.</span>ICE CROSSING</div><div class="li"><span class="n">4.</span>ZOOLANDER FICTION</div></div>
<div class="a lst" style="left:990px;top:364px"><div class="li"><span class="n">1.</span>DOORS PRESIDENT</div><div class="li"><span class="n">2.</span>MUMMY CREATURES</div><div class="li"><span class="n">3.</span>CHAPLIN LICENSE</div><div class="li"><span class="n">4.</span>ANONYMOUS HUMAN</div><div class="li"><span class="n">5.</span>FORWARD TEMPLE</div><div class="li"><span class="n">6.</span>ISLAND EXORCIST</div></div>
<div class="a nm" style="left:14px;top:591px">LINDA WILLIAMS</div>
<div class="a circ" style="left:1196.50px;top:573.50px;width:51.40px;height:51.40px;line-height:53.40px">26</div>
<div class="a lst" style="left:198px;top:493px"><div class="li"><span class="n">1.</span>RINGS HEARTBREAKERS</div><div class="li"><span class="n">2.</span>DADDY PITTSBURGH</div><div class="li"><span class="n">3.</span>GOSFORD DONNIE</div><div class="li"><span class="n">4.</span>CASUALTIES ENCINO</div><div class="li"><span class="n">5.</span>BIRDS PERDITION</div><div class="li"><span class="n">6.</span>GOLDFINGER</div><div class="li"><span class="n"></span>SENSIBILITY</div></div>
<div class="a lst" style="left:396px;top:493px"><div class="li"><span class="n">1.</span>HORN WORKING</div><div class="li"><span class="n">2.</span>MALLRATS UNITED</div></div>
<div class="a lst" style="left:594px;top:493px"><div class="li"><span class="n">1.</span>STREAK RIDGEMONT</div><div class="li"><span class="n">2.</span>INTENTIONS EMPIRE</div><div class="li"><span class="n">3.</span>VICTORY ACADEMY</div><div class="li"><span class="n">4.</span>NETWORK PEAK</div><div class="li"><span class="n">5.</span>LUCKY FLYING</div></div>
<div class="a lst" style="left:792px;top:493px"><div class="li"><span class="n">1.</span>SALUTE APOLLO</div><div class="li"><span class="n">2.</span>STRANGERS GRAFFITI</div><div class="li"><span class="n">3.</span><span style="letter-spacing:-0.75px">ANACONDA CONFESSIONS</span></div><div class="li"><span class="n">4.</span>ICE CROSSING</div><div class="li"><span class="n">5.</span>MASSACRE USUAL</div><div class="li"><span class="n">6.</span>BOOGIE AMELIE</div><div class="li"><span class="n">7.</span>DURHAM PANKY</div><div class="li"><span class="n">8.</span>YENTL IDAHO</div><div class="li"><span class="n">9.</span>REQUIEM TYCOON</div><div class="li"><span class="n">10.</span>RAGING AIRPLANE</div><div class="li"><span class="n">11.</span>FIDDLER LOST</div><div class="li"><span class="n">12.</span>GOLDMINE TYCOON</div></div>
<div class="a lst" style="left:990px;top:493px"><div class="li"><span class="n">1.</span>REAR TRADING</div></div>
<div class="a nm" style="left:14px;top:765px">BARBARA JONES</div>
<div class="a circ" style="left:1198.56px;top:749.56px;width:47.28px;height:47.28px;line-height:49.28px">22</div>
<div class="a lst" style="left:198px;top:712px"><div class="li"><span class="n">1.</span>DOGMA FAMILY</div><div class="li"><span class="n">2.</span>WARDROBE PHANTOM</div><div class="li"><span class="n">3.</span>PANIC CLUB</div><div class="li"><span class="n">4.</span>ALAMO VIDEOTAPE</div><div class="li"><span class="n">5.</span>HOOSIERS BIRDCAGE</div></div>
<div class="a lst" style="left:396px;top:712px"><div class="li"><span class="n">1.</span>BEDAZZLED MARRIED</div><div class="li"><span class="n">2.</span>AMADEUS HOLY</div><div class="li"><span class="n">3.</span>MAGIC MALLRATS</div><div class="li"><span class="n">4.</span>SHANGHAI TYCOON</div><div class="li"><span class="n">5.</span>STAGE WORLD</div></div>
<div class="a lst" style="left:594px;top:712px"><div class="li"><span class="n">1.</span>IDAHO LOVE</div><div class="li"><span class="n">2.</span>ARACHNOPHOBIA</div><div class="li"><span class="n"></span>ROLLERCOASTER</div><div class="li"><span class="n">3.</span>PHILADELPHIA WIFE</div><div class="li"><span class="n">4.</span>ROLLERCOASTER</div><div class="li"><span class="n"></span>BAGGAGE</div></div>
<div class="a lst" style="left:792px;top:712px"><div class="li"><span class="n">1.</span>TOMORROW HUSTLER</div><div class="li"><span class="n">2.</span>VERTIGO NORTHWEST</div><div class="li"><span class="n">3.</span>MADIGAN DORADO</div><div class="li"><span class="n">4.</span>REUNION WITCHES</div></div>
<div class="a lst" style="left:990px;top:712px"><div class="li"><span class="n">1.</span>ARTIST COLDBLOODED</div></div>
</div>
<div class="a" style="left:1289px;top:199px;width:16px;height:787px;background:#f0f0f0"></div>
<svg class="a" style="left:1292px;top:205px" width="9" height="6" viewBox="0 0 9 6"><path d="M0.8 5.2L4.5 1.5L8.2 5.2" fill="none" stroke="#505050" stroke-width="1.6"/></svg>
<div class="a" style="left:1289px;top:216px;width:16px;height:17px;background:#cdcdcd"></div>
<svg class="a" style="left:1292px;top:975px" width="9" height="6" viewBox="0 0 9 6"><path d="M0.8 0.8L4.5 4.5L8.2 0.8" fill="none" stroke="#505050" stroke-width="1.6"/></svg>
<div class="a" style="left:5px;top:988px;width:1302px;height:5px;background:#f0f0f0"></div>
<svg class="a" style="left:7px;top:154px" width="17" height="18" viewBox="0 0 17 18"><path d="M1.5 1.5H9L12.5 5V15.5H1.5Z" fill="#eef4fa" stroke="#4d6a8c"/><path d="M9 1.5V5H12.5" fill="#fff" stroke="#4d6a8c"/><path d="M3.5 6.5H9M3.5 8.5H10M3.5 10.5H10M3.5 12.5H8" stroke="#8aa8c8"/><path d="M12 8 L9 13 L11.5 13 L9.5 17.5 L15 11.5 L12.5 11.5 L14.5 8Z" fill="#f06010"/></svg><!-- status -->
<div id="status" class="a"></div>
<div class="btn" style="left:1196px;width:49px">Skin</div>
<div class="btn" style="left:1248px;width:49px">Language</div>
<div class="a" style="left:1307px;top:1006px;width:2px;height:2px;background:#b8b8b8"></div>
<div class="a" style="left:1304px;top:1009px;width:2px;height:2px;background:#b8b8b8"></div>
<div class="a" style="left:1307px;top:1009px;width:2px;height:2px;background:#b8b8b8"></div>
<div class="a" style="left:1301px;top:1012px;width:2px;height:2px;background:#b8b8b8"></div>
<div class="a" style="left:1304px;top:1012px;width:2px;height:2px;background:#b8b8b8"></div>
<div class="a" style="left:1307px;top:1012px;width:2px;height:2px;background:#b8b8b8"></div></body></html>
